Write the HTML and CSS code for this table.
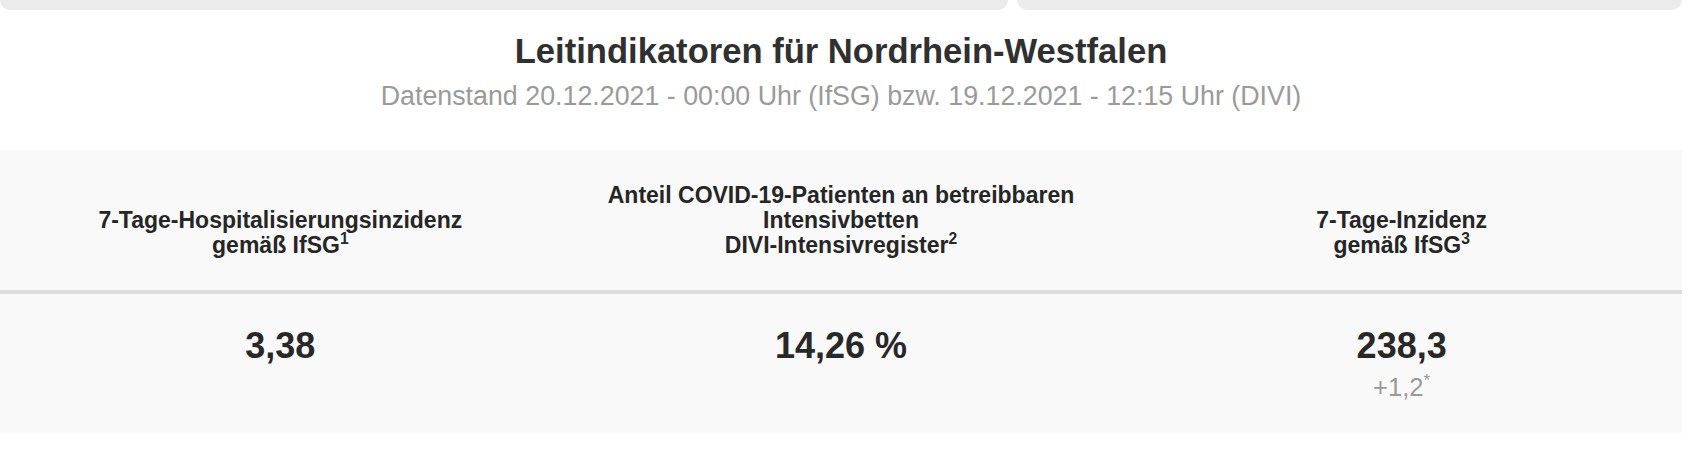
FILE: index.html
```html
<!DOCTYPE html>
<html lang="de">
<head>
<meta charset="utf-8">
<title>Leitindikatoren</title>
<link rel="stylesheet" href="styles.css">
</head>
<body>
<div class="page">
  <div class="cards">
    <div class="card card-wide"></div>
    <div class="card card-narrow"></div>
  </div>
  <h2 class="title">Leitindikatoren für Nordrhein-Westfalen</h2>
  <p class="subtitle">Datenstand 20.12.2021 - 00:00 Uhr (IfSG) bzw. 19.12.2021 - 12:15 Uhr (DIVI)</p>
  <div class="table">
    <div class="row head">
      <div class="cell">7-Tage-Hospitalisierungsinzidenz<br>gemäß IfSG<sup>1</sup></div>
      <div class="cell">Anteil COVID-19-Patienten an betreibbaren<br>Intensivbetten<br>DIVI-Intensivregister<sup>2</sup></div>
      <div class="cell">7-Tage-Inzidenz<br>gemäß IfSG<sup>3</sup></div>
    </div>
    <div class="row body">
      <div class="cell"><div class="value">3,38</div></div>
      <div class="cell"><div class="value">14,26 %</div></div>
      <div class="cell"><div class="value">238,3</div><div class="delta">+1,2<sup>*</sup></div></div>
    </div>
  </div>
</div>
</body>
</html>
```
FILE: styles.css
```css
html, body {
  margin: 0;
  padding: 0;
  background: #ffffff;
}
body {
  font-family: "Liberation Sans", Arial, sans-serif;
  color: #333333;
}
.page {
  width: 1682px;
}
.cards {
  display: flex;
  gap: 9px;
  height: 10px;
}
.card {
  background: #ebebeb;
  border-radius: 0 0 10px 10px;
}
.card-wide { width: 1008px; }
.card-narrow { flex: 1; }
.title {
  margin: 21px 0 0;
  font-size: 34.6px;
  line-height: 40px;
  font-weight: bold;
  text-align: center;
  color: #303030;
}
.subtitle {
  margin: 9px 0 0;
  font-size: 26.8px;
  line-height: 32px;
  text-align: center;
  color: #9a9a9a;
}
.table {
  margin-top: 38px;
  background: #f9f9f9;
}
.row {
  display: grid;
  grid-template-columns: 1fr 1fr 1fr;
}
.head {
  height: 108px;
  padding-bottom: 32px;
  align-items: end;
  border-bottom: 4px solid #dddddd;
}
.head .cell {
  text-align: center;
  font-size: 23px;
  line-height: 25px;
  font-weight: bold;
  color: #262626;
}
.head sup, .delta sup {
  font-size: 0.68em;
  line-height: 0;
  vertical-align: 0.55em;
}
.body {
  padding: 32px 0 31px;
  align-items: start;
}
.body .cell {
  text-align: center;
}
.value {
  font-size: 36px;
  line-height: 40px;
  font-weight: bold;
  color: #282828;
}
.delta {
  margin-top: 6px;
  font-size: 25.5px;
  line-height: 30px;
  color: #9a9a9a;
}
```
